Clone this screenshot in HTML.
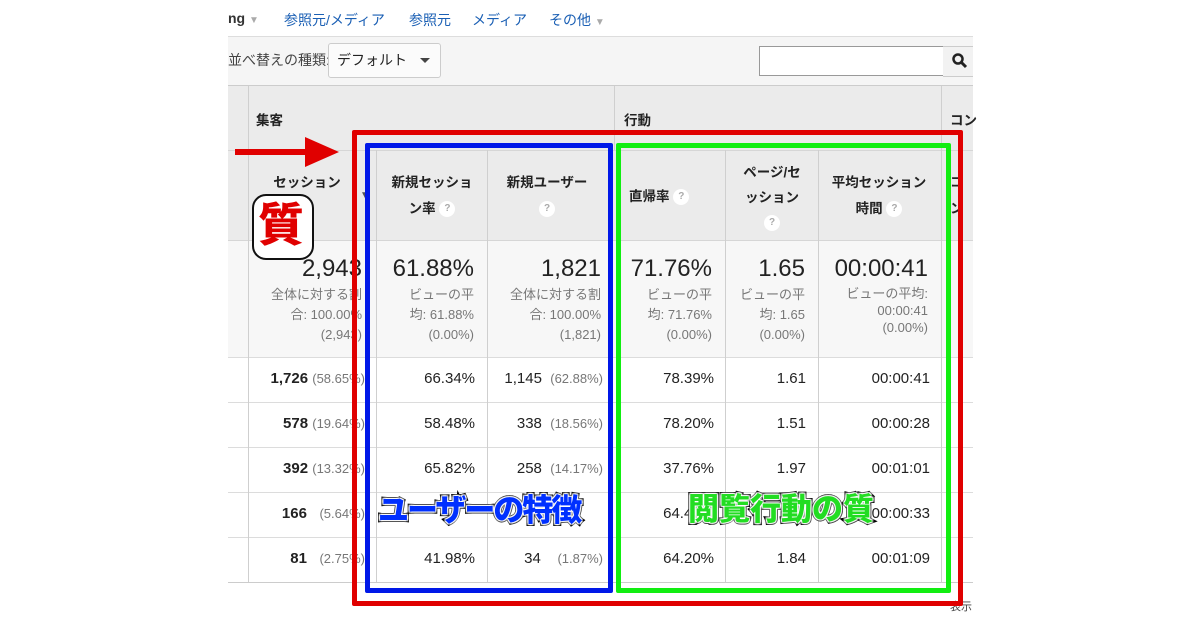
<!DOCTYPE html>
<html><head><meta charset="utf-8">
<style>
body{margin:0;width:1200px;height:630px;background:#fff;position:relative;overflow:hidden;font-family:"Liberation Sans","Noto Sans CJK JP",sans-serif;}
.a{position:absolute;}
.t{position:absolute;white-space:nowrap;}
.nav{color:#1a5fb4;font-size:14px;top:10px;}
.hd{font-size:13.5px;font-weight:bold;color:#222;text-align:center;line-height:26px;}
.q{display:inline-block;width:16px;height:16px;border-radius:50%;background:#fff;color:#aaa;font-size:10px;line-height:16px;text-align:center;font-weight:bold;vertical-align:middle;}
.big{font-size:24px;color:#222;text-align:right;}
.sm{font-size:13px;color:#777;text-align:right;line-height:20px;}
.d{font-size:15px;color:#222;text-align:right;}
.g{color:#777;font-size:13px;}
.vl{position:absolute;width:1px;background:#cfcfcf;}
.hl{position:absolute;height:1px;background:#dcdcdc;}
.lbl{position:absolute;white-space:nowrap;font-weight:900;paint-order:stroke fill;-webkit-text-stroke:4px #000;text-shadow:0 0 2px #fff,1px 1px 1px #fff,-1px -1px 1px #fff,1px -1px 1px #fff,-1px 1px 1px #fff;}
</style></head><body>
<div class="t" style="left:228px;top:10px;font-size:14px;font-weight:bold;color:#333">ng <span style="color:#aaa;font-size:10px">▼</span></div>
<div class="t nav" style="left:284px">参照元/メディア</div>
<div class="t nav" style="left:409px">参照元</div>
<div class="t nav" style="left:472px">メディア</div>
<div class="t nav" style="left:549px">その他 <span style="color:#aaa;font-size:10px">▼</span></div>
<div class="a" style="left:228px;top:36px;width:745px;height:1px;background:#ddd"></div>
<div class="a" style="left:228px;top:37px;width:745px;height:48px;background:#f5f5f5"></div>
<div class="t" style="left:228px;top:50px;font-size:14px;color:#444">並べ替えの種類:</div>
<div class="a" style="left:328px;top:43px;width:111px;height:33px;border:1px solid #ccc;border-radius:3px;background:#fbfbfb"></div>
<div class="t" style="left:337px;top:50px;font-size:14px;color:#222">デフォルト</div>
<div class="a" style="left:420px;top:58px;width:0;height:0;border-left:5px solid transparent;border-right:5px solid transparent;border-top:5px solid #444"></div>
<div class="a" style="left:759px;top:46px;width:183px;height:28px;border:1px solid #999;background:#fff"></div>
<div class="a" style="left:943px;top:46px;width:30px;height:29px;background:#f2f2f2;border-top:1px solid #ccc;border-bottom:1px solid #ccc"></div>
<svg class="a" style="left:951px;top:52px" width="18" height="18"><circle cx="7" cy="7" r="4.5" fill="none" stroke="#222" stroke-width="2.5"/><line x1="10" y1="10" x2="15" y2="15" stroke="#222" stroke-width="3"/></svg>
<div class="a" style="left:228px;top:85px;width:745px;height:1px;background:#ccc"></div>
<div class="a" style="left:228px;top:86px;width:745px;height:154px;background:#ebebeb"></div>
<div class="a" style="left:228px;top:240px;width:745px;height:117px;background:#f7f7f7"></div>
<div class="hl" style="left:228px;top:150px;width:745px;background:#d6d6d6"></div>
<div class="hl" style="left:228px;top:240px;width:745px;background:#d6d6d6"></div>
<div class="hl" style="left:228px;top:357px;width:745px"></div>
<div class="hl" style="left:228px;top:402px;width:745px"></div>
<div class="hl" style="left:228px;top:447px;width:745px"></div>
<div class="hl" style="left:228px;top:492px;width:745px"></div>
<div class="hl" style="left:228px;top:537px;width:745px"></div>
<div class="hl" style="left:228px;top:582px;width:745px;background:#ccc"></div>
<div class="vl" style="left:248px;top:86px;height:496px"></div>
<div class="vl" style="left:614px;top:86px;height:64px"></div>
<div class="vl" style="left:941px;top:86px;height:496px"></div>
<div class="vl" style="left:376px;top:150px;height:432px"></div>
<div class="vl" style="left:487px;top:150px;height:432px"></div>
<div class="vl" style="left:725px;top:150px;height:432px"></div>
<div class="vl" style="left:818px;top:150px;height:432px"></div>
<div class="t" style="left:256px;top:109px;font-size:13.5px;font-weight:bold;color:#222">集客</div>
<div class="t" style="left:624px;top:109px;font-size:13.5px;font-weight:bold;color:#222">行動</div>
<div class="t" style="left:950px;top:109px;font-size:13.5px;font-weight:bold;color:#222">コン</div>
<div class="t hd" style="left:262px;top:170px;width:90px">セッション</div>
<div class="t" style="left:360px;top:190px;font-size:10px;color:#555">▼</div>
<div class="t hd" style="left:378px;top:170px;width:108px">新規セッショ<br>ン率 <span class="q">?</span></div>
<div class="t hd" style="left:489px;top:170px;width:116px">新規ユーザー<br><span class="q">?</span></div>
<div class="t hd" style="left:622px;top:184px;width:90px;text-align:left;padding-left:7px">直帰率 <span class="q">?</span></div>
<div class="t hd" style="left:726px;top:160px;width:92px;line-height:25px">ページ/セ<br>ッション<br><span class="q">?</span></div>
<div class="t hd" style="left:819px;top:170px;width:120px">平均セッション<br>時間 <span class="q">?</span></div>
<div class="t hd" style="left:950px;top:170px;text-align:left">コ<br>ン</div>
<div class="t big" style="left:250px;top:255px;width:112px">2,943</div>
<div class="t sm" style="left:250px;top:285px;width:112px">全体に対する割<br>合: 100.00%<br>(2,943)</div>
<div class="t big" style="left:378px;top:255px;width:96px">61.88%</div>
<div class="t sm" style="left:378px;top:285px;width:96px">ビューの平<br>均: 61.88%<br>(0.00%)</div>
<div class="t big" style="left:489px;top:255px;width:112px">1,821</div>
<div class="t sm" style="left:489px;top:285px;width:112px">全体に対する割<br>合: 100.00%<br>(1,821)</div>
<div class="t big" style="left:622px;top:255px;width:90px">71.76%</div>
<div class="t sm" style="left:622px;top:285px;width:90px">ビューの平<br>均: 71.76%<br>(0.00%)</div>
<div class="t big" style="left:727px;top:255px;width:78px">1.65</div>
<div class="t sm" style="left:727px;top:285px;width:78px">ビューの平<br>均: 1.65<br>(0.00%)</div>
<div class="t big" style="left:820px;top:255px;width:108px">00:00:41</div>
<div class="t sm" style="left:820px;top:285px;width:108px;line-height:17px">ビューの平均:<br>00:00:41<br>(0.00%)</div>
<div class="t d" style="left:250px;top:370px;width:115px"><b>1,726</b> <span class="g">(58.65%)</span></div>
<div class="t d" style="left:250px;top:415px;width:115px"><b>578</b> <span class="g">(19.64%)</span></div>
<div class="t d" style="left:250px;top:460px;width:115px"><b>392</b> <span class="g">(13.32%)</span></div>
<div class="t d" style="left:250px;top:505px;width:115px"><b>166</b> &nbsp;&nbsp;<span class="g">(5.64%)</span></div>
<div class="t d" style="left:250px;top:550px;width:115px"><b>81</b> &nbsp;&nbsp;<span class="g">(2.75%)</span></div>
<div class="t d" style="left:378px;top:370px;width:97px">66.34%</div>
<div class="t d" style="left:378px;top:415px;width:97px">58.48%</div>
<div class="t d" style="left:378px;top:460px;width:97px">65.82%</div>
<div class="t d" style="left:378px;top:550px;width:97px">41.98%</div>
<div class="t d" style="left:489px;top:370px;width:114px">1,145 &nbsp;<span class="g">(62.88%)</span></div>
<div class="t d" style="left:489px;top:415px;width:114px">338 &nbsp;<span class="g">(18.56%)</span></div>
<div class="t d" style="left:489px;top:460px;width:114px">258 &nbsp;<span class="g">(14.17%)</span></div>
<div class="t d" style="left:489px;top:550px;width:114px">34 &nbsp;&nbsp;&nbsp;<span class="g">(1.87%)</span></div>
<div class="t d" style="left:622px;top:370px;width:92px">78.39%</div>
<div class="t d" style="left:622px;top:415px;width:92px">78.20%</div>
<div class="t d" style="left:622px;top:460px;width:92px">37.76%</div>
<div class="t d" style="left:622px;top:505px;width:92px">64.40%</div>
<div class="t d" style="left:622px;top:550px;width:92px">64.20%</div>
<div class="t d" style="left:727px;top:370px;width:79px">1.61</div>
<div class="t d" style="left:727px;top:415px;width:79px">1.51</div>
<div class="t d" style="left:727px;top:460px;width:79px">1.97</div>
<div class="t d" style="left:727px;top:550px;width:79px">1.84</div>
<div class="t d" style="left:820px;top:370px;width:110px">00:00:41</div>
<div class="t d" style="left:820px;top:415px;width:110px">00:00:28</div>
<div class="t d" style="left:820px;top:460px;width:110px">00:01:01</div>
<div class="t d" style="left:820px;top:505px;width:110px">00:00:33</div>
<div class="t d" style="left:820px;top:550px;width:110px">00:01:09</div>
<div class="t" style="left:950px;top:598px;font-size:11px;color:#444">表示</div>
<div class="a" style="left:352px;top:130px;width:601px;height:466px;border:5px solid #e00000;border-radius:2px"></div>
<div class="a" style="left:365px;top:143px;width:238px;height:440px;border:5px solid #0018e8;border-radius:2px"></div>
<div class="a" style="left:616px;top:143px;width:325px;height:440px;border:5px solid #11ee11;border-radius:2px"></div>
<div class="a" style="left:235px;top:149px;width:72px;height:6px;background:#e00000"></div>
<div class="a" style="left:305px;top:137px;width:0;height:0;border-top:15px solid transparent;border-bottom:15px solid transparent;border-left:34px solid #e00000"></div>
<div class="a" style="left:252px;top:194px;width:58px;height:62px;background:#fff;border:2px solid #111;border-radius:14px"></div>
<div class="t" style="left:258px;top:196px;font-size:46px;font-weight:900;color:#e00000;line-height:58px">質</div>
<div class="lbl" style="left:378px;top:491px;font-size:31px;color:#0030ff;line-height:40px;letter-spacing:-2px">ユーザーの特徴</div>
<div class="lbl" style="left:688px;top:490px;font-size:31px;color:#22dd22;line-height:40px">閲覧行動の質</div>
</body></html>
